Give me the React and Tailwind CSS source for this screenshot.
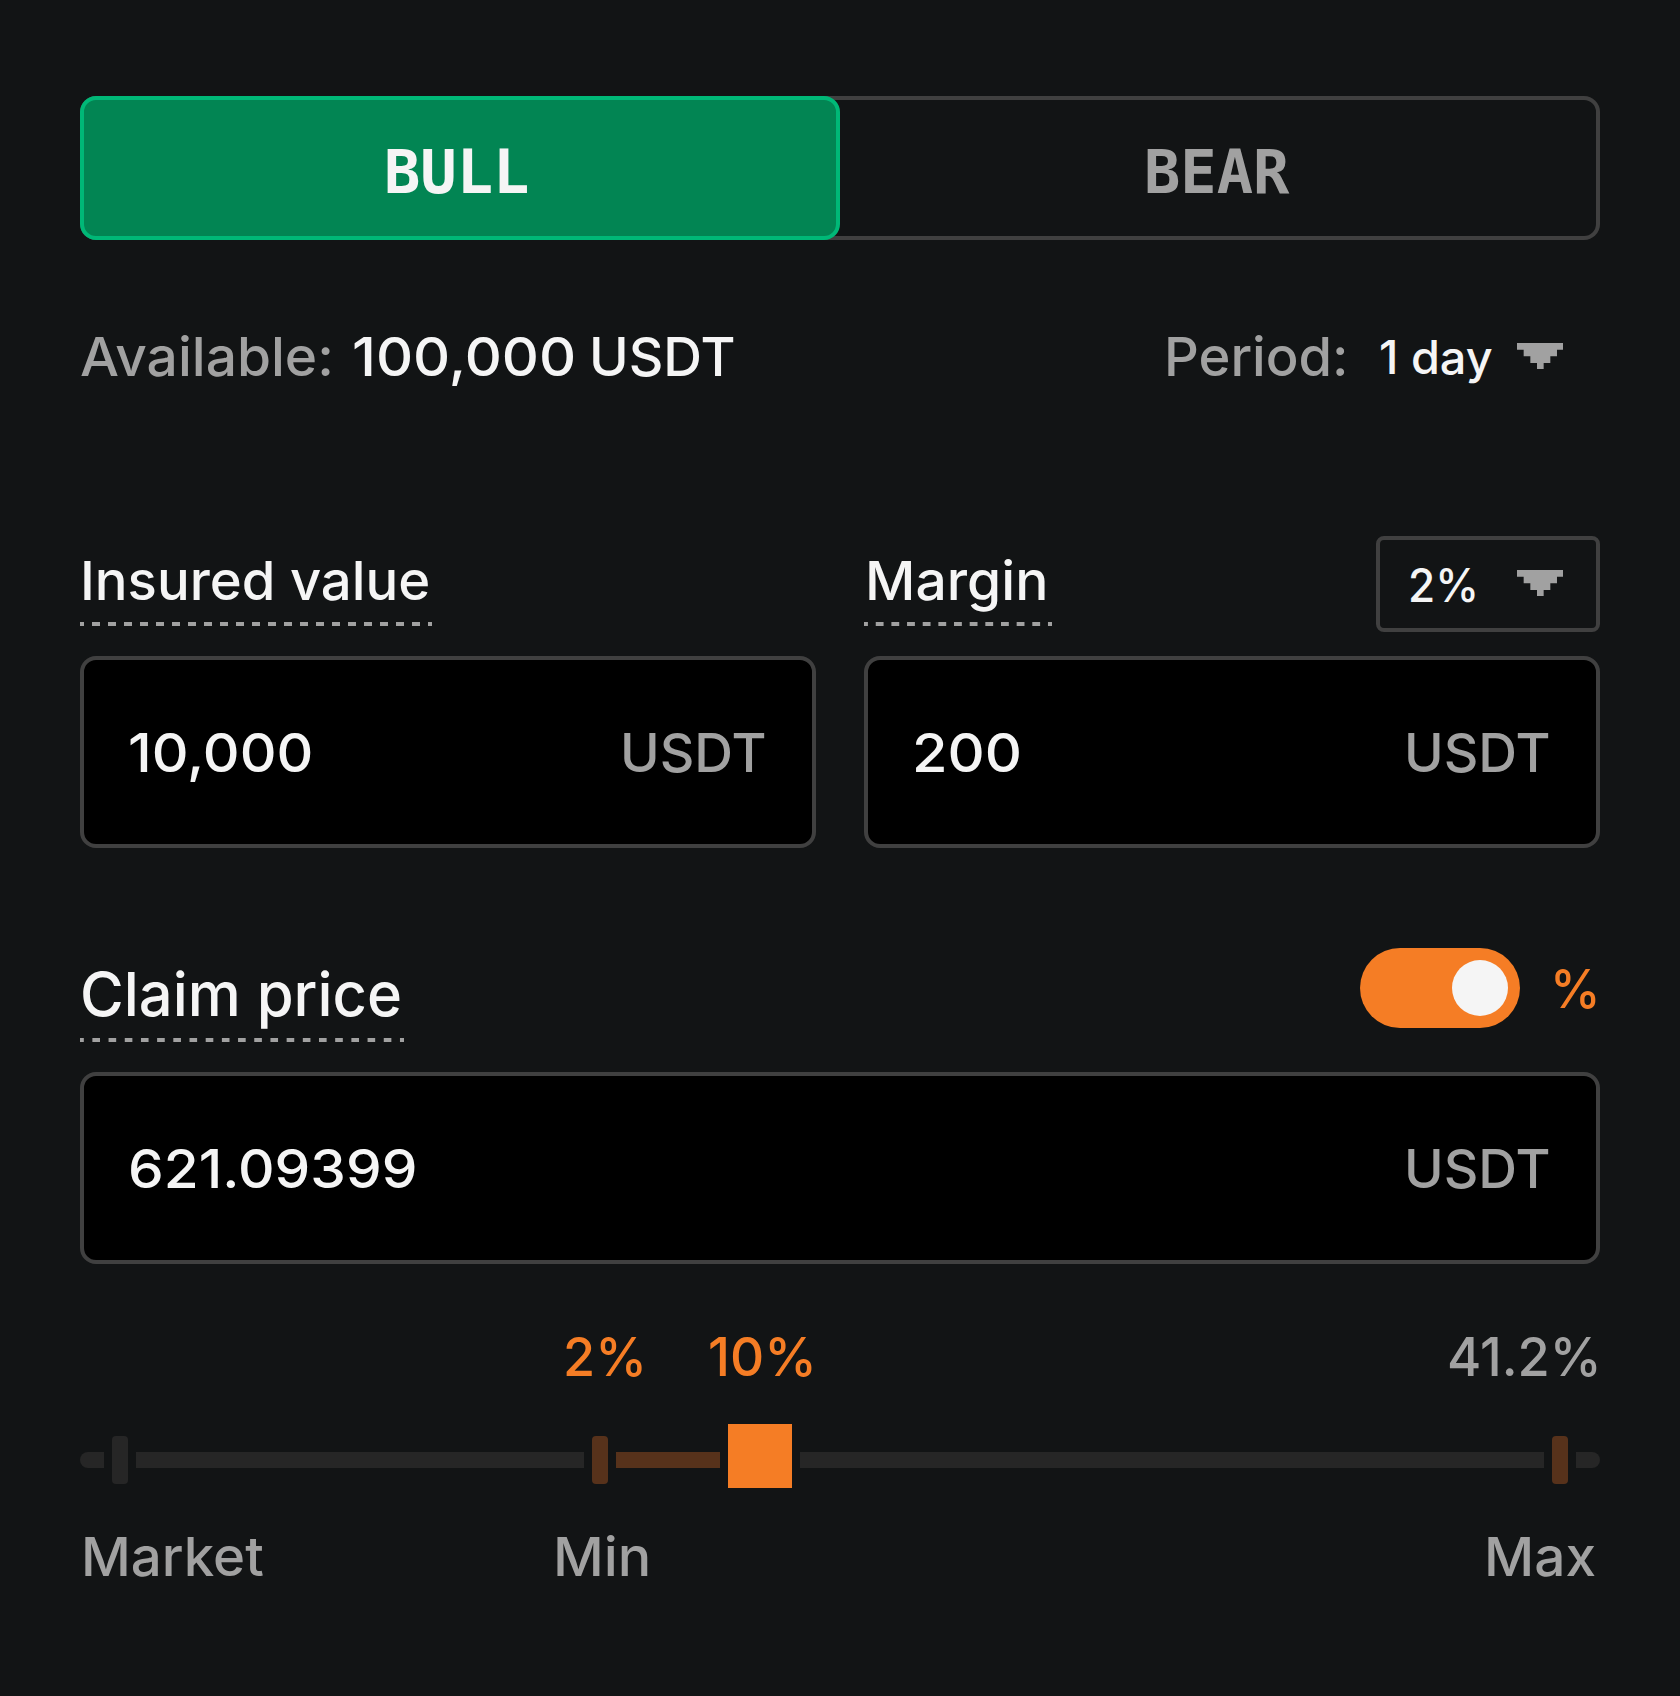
import { useLayoutEffect, useRef, useState } from "react";

// Stretches its text horizontally so that it fills the width set by `className`.
function FitText({ className, children }) {
  const outer = useRef(null);
  const inner = useRef(null);
  const [ratio, setRatio] = useState(1);
  useLayoutEffect(() => {
    setRatio(outer.current.clientWidth / inner.current.offsetWidth);
  }, [children]);
  return (
    <span ref={outer} className={"block shrink-0 whitespace-nowrap " + className}>
      <span ref={inner} className="inline-block origin-left" style={{ transform: `scaleX(${ratio})` }}>
        {children}
      </span>
    </span>
  );
}

function Caret() {
  return (
    <svg viewBox="0 0 7 4" className="mb-0.5 h-[26.67px] w-[46.67px] shrink-0 fill-[#a1a1a1]" aria-hidden="true">
      <path d="M0 0h7v1H6v1H5v1H4v1H3V3H2V2H1V1H0z" />
    </svg>
  );
}

function Underline({ className }) {
  return (
    <div
      className={
        "h-1 w-full bg-[linear-gradient(90deg,#a1a1a1_25%,transparent_25%,transparent_75%,#a1a1a1_75%)] " + className
      }
    />
  );
}

function Field({ value, valueClass }) {
  return (
    <div className="flex h-48 items-center justify-between rounded-2xl border-4 border-[#404040] bg-black pt-0.5 pl-11 pr-[46px] text-[54px] leading-[56px]">
      <FitText className={valueClass}>{value}</FitText>
      <FitText className="w-[146px] text-[#a1a1a1]">USDT</FitText>
    </div>
  );
}

function Tick({ className }) {
  return <div className={"mt-3 h-12 w-4 rounded " + className} />;
}

function Track({ className }) {
  return <div className={"mt-7 h-4 " + className} />;
}

export default function App() {
  return (
    <main className="h-[1696px] w-[1680px] overflow-hidden bg-[#121415] px-20 pt-24 font-['Inter',sans-serif] text-[54px] leading-[56px] font-medium text-[#f5f5f5]">
      <div className="flex h-36 rounded-2xl font-['DejaVu_Sans_Mono',monospace] text-[60px] leading-[64px] font-bold shadow-[inset_0_0_0_4px_#404040]">
        <button className="flex w-1/2 items-center justify-center rounded-2xl border-4 border-[#00b877] bg-[#028553] pt-[7px] pr-2">
          <FitText className="w-[146px]">BULL</FitText>
        </button>
        <button className="flex w-1/2 items-center justify-center pt-[7px] pr-2 text-[#a1a1a1]">
          <FitText className="w-[146px]">BEAR</FitText>
        </button>
      </div>

      <div className="mt-[89px] flex h-14 items-center">
        <FitText className="w-[254px] text-[#a1a1a1]">Available:</FitText>
        <FitText className="ml-[18px] w-[224px]">100,000</FitText>
        <FitText className="ml-[13px] w-[146px]">USDT</FitText>
        <FitText className="ml-auto w-[185px] text-[#a1a1a1]">Period:</FitText>
        <FitText className="ml-[30px] w-[114px] text-[46px]">1 day</FitText>
        <div className="mr-[36.7px] ml-[24px]">
          <Caret />
        </div>
      </div>

      <div className="mt-[151px] grid grid-cols-2 gap-12">
        <section>
          <div className="flex h-24 items-start pt-[17px]">
            <div className="w-[352px]">
              <FitText className="w-[350px]">Insured value</FitText>
              <Underline className="mt-[13px] bg-[size:16px_4px]" />
            </div>
          </div>
          <div className="mt-6">
            <Field value="10,000" valueClass="w-[185px]" />
          </div>
        </section>
        <section>
          <div className="flex h-24 items-start justify-between">
            <div className="w-[188px] pt-[17px]">
              <FitText className="ml-px w-[183px]">Margin</FitText>
              <Underline className="mt-[13px] bg-[size:15.667px_4px]" />
            </div>
            <button className="flex h-24 w-56 items-center justify-between rounded-lg border-4 border-[#404040] pr-[32.7px] pl-7 text-[46px]">
              <FitText className="w-[71px] pt-0.5 text-left">2%</FitText>
              <Caret />
            </button>
          </div>
          <div className="mt-6">
            <Field value="200" valueClass="w-[110px]" />
          </div>
        </section>
      </div>

      <div className="mt-[100px] flex h-[94px] items-start justify-between">
        <div className="w-[324px] pt-[14px]">
          <FitText className="w-[322px] text-[61px] leading-[64px]">Claim price</FitText>
          <Underline className="mt-3 bg-[size:16.2px_4px]" />
        </div>
        <div className="flex h-20 items-center">
          <button className="flex h-20 w-40 items-center justify-end rounded-full bg-[#f57d25] pr-3">
            <span className="size-14 rounded-full bg-[#f5f5f5]" />
          </button>
          <FitText className="-mr-px ml-[30px] w-[51px] pt-0.5 text-[#f57d25]">%</FitText>
        </div>
      </div>
      <div className="mt-[30px]">
        <Field value="621.09399" valueClass="w-[289px]" />
      </div>

      <div className="mt-[65px] flex text-[#f57d25]">
        <FitText className="ml-[483px] w-[84px]">2%</FitText>
        <FitText className="ml-[61px] w-[109px]">10%</FitText>
        <FitText className="-mr-0.5 ml-auto w-[155px] text-[#a1a1a1]">41.2%</FitText>
      </div>
      <div className="mt-[39px] flex h-16 items-start gap-2">
        <Track className="w-6 rounded-l-full bg-[#262626]" />
        <Tick className="bg-[#262626]" />
        <Track className="w-[448px] bg-[#262626]" />
        <Tick className="bg-[#57321b]" />
        <Track className="w-[104px] bg-[#57321b]" />
        <div className="size-16 bg-[#f57d25]" />
        <Track className="w-[744px] bg-[#262626]" />
        <Tick className="bg-[#57321b]" />
        <Track className="w-6 rounded-r-full bg-[#262626]" />
      </div>
      <div className="mt-[41px] flex text-[#a1a1a1]">
        <FitText className="ml-px w-[183px]">Market</FitText>
        <FitText className="ml-[289px] w-[98px]">Min</FitText>
        <FitText className="mr-1 ml-auto w-[112px]">Max</FitText>
      </div>
    </main>
  );
}
